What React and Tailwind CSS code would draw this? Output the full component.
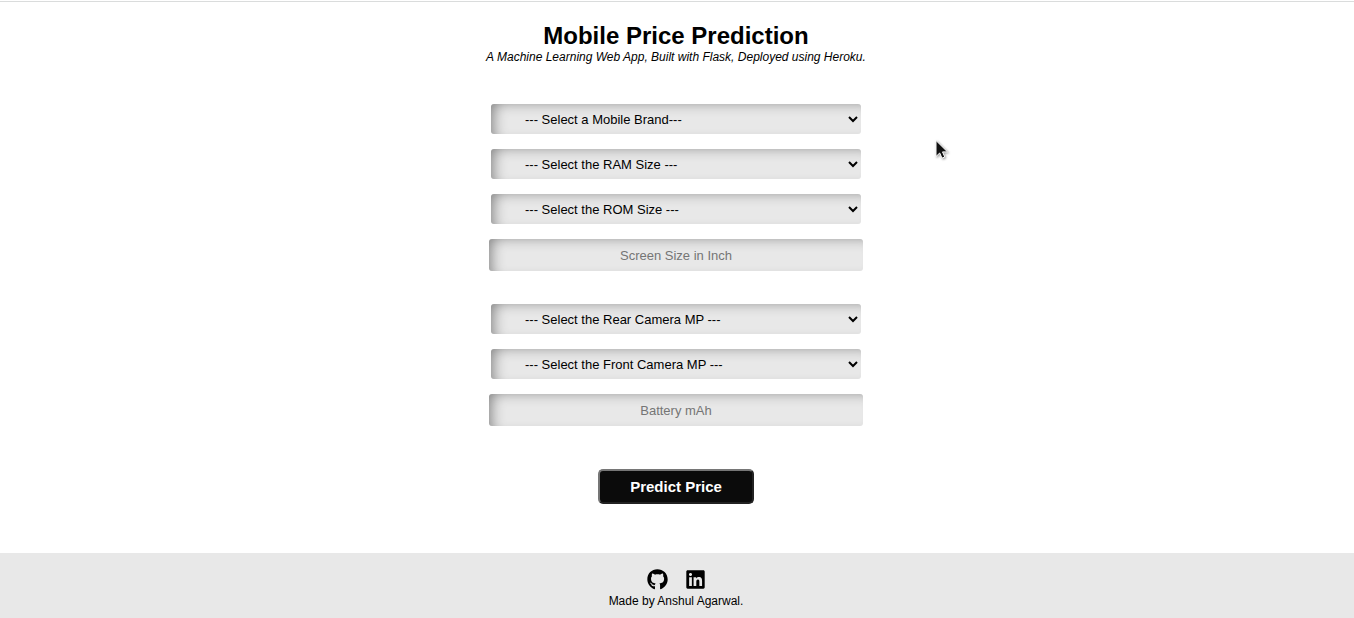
import { FaGithub, FaLinkedin } from "react-icons/fa";

const fieldLook =
  "rounded-[3px] border-0 bg-[#e8e8e8] text-[13px] shadow-[inset_8px_4px_14px_-6px_#808080] outline-none";

function SelectField({ id, label, options }) {
  return (
    <select
      id={id}
      name={id}
      aria-label={label}
      defaultValue=""
      className={`${fieldLook} h-[30px] w-[370px] max-w-full pr-0 pl-[30px] text-black`}
    >
      <option value="">{label}</option>
      {options.map((option) => (
        <option key={option} value={option}>
          {option}
        </option>
      ))}
    </select>
  );
}

function TextField({ id, label }) {
  return (
    <input
      id={id}
      name={id}
      type="text"
      aria-label={label}
      placeholder={label}
      className={`${fieldLook} h-8 w-[374px] max-w-full px-0.5 text-center text-black placeholder:text-[#757575]`}
    />
  );
}

function Pointer() {
  return (
    <svg
      aria-hidden="true"
      viewBox="0 0 14 21"
      className="pointer-events-none absolute top-[139px] left-[calc(50%+258px)] h-[21px] w-[14px] drop-shadow-[1px_1px_1px_#00000066]"
    >
      <path
        d="M1 1.5v16l3.7-3.5 2.3 5.2 2.8-1.2-2.3-5.1h5z"
        fill="#111111"
        stroke="#ffffff"
        strokeWidth="1"
      />
    </svg>
  );
}

export default function App() {
  return (
    <div className="relative flex min-h-screen flex-col bg-white pt-px font-['Liberation_Sans',Arial,sans-serif] text-black">
      <header className="border-t border-[#dadcdc] pt-5 pr-0.5 text-center">
        <h1 className="text-2xl leading-7 font-bold">Mobile Price Prediction</h1>
        <p className="text-xs leading-[14px] italic">
          A Machine Learning Web App, Built with Flask, Deployed using Heroku.
        </p>
      </header>

      <main className="flex-1 pt-10 pr-0.5 pb-12">
        <form
          className="flex flex-col items-center"
          onSubmit={(event) => event.preventDefault()}
        >
          <div className="flex flex-col items-center gap-[15px]">
            <SelectField
              id="brand"
              label="--- Select a Mobile Brand---"
              options={["Apple", "Samsung", "Xiaomi", "Realme"]}
            />
            <SelectField
              id="ram"
              label="--- Select the RAM Size ---"
              options={["2 GB", "4 GB", "6 GB", "8 GB"]}
            />
            <SelectField
              id="rom"
              label="--- Select the ROM Size ---"
              options={["32 GB", "64 GB", "128 GB", "256 GB"]}
            />
            <TextField id="screen" label="Screen Size in Inch" />
          </div>
          <div className="mt-[33px] flex flex-col items-center gap-[15px]">
            <SelectField
              id="rear"
              label="--- Select the Rear Camera MP ---"
              options={["12 MP", "48 MP", "64 MP"]}
            />
            <SelectField
              id="front"
              label="--- Select the Front Camera MP ---"
              options={["8 MP", "16 MP", "32 MP"]}
            />
            <TextField id="battery" label="Battery mAh" />
          </div>
          <button
            type="submit"
            className="mt-[43px] h-[35px] w-[156px] rounded-[5px] border-2 border-t-[#767676] border-r-[#222222] border-b-[#222222] border-l-[#767676] bg-[#0b0b0b] pt-px text-[15px] leading-4 font-bold text-white"
          >
            Predict Price
          </button>
        </form>
      </main>

      <footer className="flex flex-col items-center bg-[#e8e8e8] pt-4 pr-0.5 pb-[10px]">
        <div className="flex gap-[17px]">
          <a href="#github" aria-label="GitHub">
            <FaGithub className="h-[21px] w-[21px]" />
          </a>
          <a href="#linkedin" aria-label="LinkedIn">
            <FaLinkedin className="h-[21px] w-[21px]" />
          </a>
        </div>
        <p className="mt-1 text-xs leading-[14px]">Made by Anshul Agarwal.</p>
      </footer>

      <Pointer />
    </div>
  );
}
